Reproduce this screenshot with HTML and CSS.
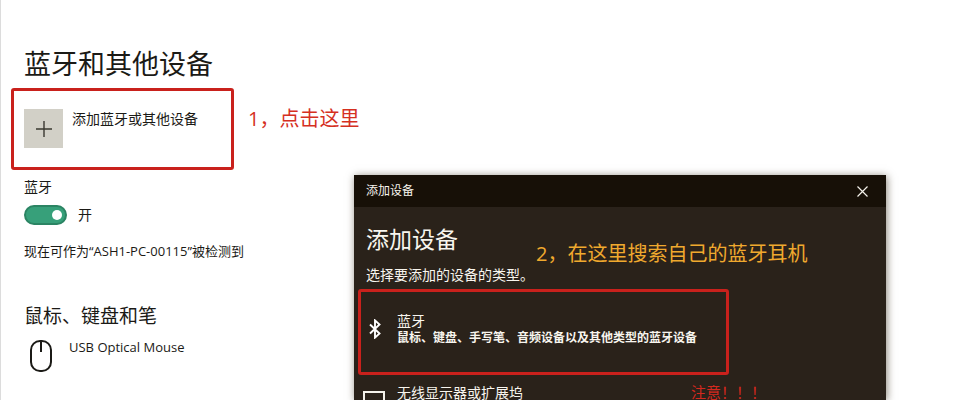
FILE: index.html
```
<!DOCTYPE html>
<html lang="zh-CN">
  <head>
    <meta charset="UTF-8" />
    <meta name="viewport" content="width=device-width, initial-scale=1.0" />
    <title>蓝牙和其他设备</title>
    <link rel="stylesheet" href="styles.css">
  </head>
  <body>
    <main class="settings">
      <h1>蓝牙和其他设备</h1>
      <div class="step">
        <div class="highlight">
          <button class="add-device" type="button">
            <span class="plus">
              <svg width="16" height="16" viewBox="0 0 16 16" fill="none" stroke="#3a3831" stroke-width="1.4">
                <path d="M8 0v16M0 8h16" />
              </svg>
            </span>
            <span>添加蓝牙或其他设备</span>
          </button>
        </div>
        <p class="note note-red">1，点击这里</p>
      </div>

      <label class="toggle-label" for="bluetooth">蓝牙</label>
      <div class="toggle-row">
        <input class="toggle" type="checkbox" id="bluetooth" checked>
        <span>开</span>
      </div>
      <p class="status">现在可作为“ASH1-PC-00115”被检测到</p>

      <h2>鼠标、键盘和笔</h2>
      <div class="device">
        <svg width="22" height="32" viewBox="0 0 22 32" fill="none" stroke="#1b1a16" stroke-width="2">
          <rect x="1" y="1" width="20" height="30" rx="9" />
          <path d="M11 1v11" />
        </svg>
        <span>USB Optical Mouse</span>
      </div>
    </main>

    <section class="dialog" role="dialog" aria-labelledby="dialog-title">
      <header class="titlebar">
        <span>添加设备</span>
        <button class="close" type="button" aria-label="关闭">
          <svg width="11" height="11" viewBox="0 0 11 11" fill="none" stroke="#f4f1ea" stroke-width="1.2">
            <path d="M.5 .5l10 10M10.5 .5l-10 10" />
          </svg>
        </button>
      </header>
      <div class="dialog-head">
        <h2 id="dialog-title">添加设备</h2>
        <p>选择要添加的设备的类型。</p>
        <p class="note note-orange">2，在这里搜索自己的蓝牙耳机</p>
      </div>
      <div class="choices">
        <button class="choice choice-marked" type="button">
          <svg class="choice-icon" width="12" height="20" viewBox="0 0 12 20" fill="none" stroke="#fff" stroke-width="1.9">
            <path d="M1 5.5l9.500 9L6 18.600V1.400l4.500 4.100L1 14.500" />
          </svg>
          <span class="choice-text">
            <span>蓝牙</span>
            <strong>鼠标、键盘、手写笔、音频设备以及其他类型的蓝牙设备</strong>
          </span>
        </button>
        <div class="choice-row">
          <button class="choice" type="button">
            <svg class="choice-icon" width="22" height="18" viewBox="0 0 22 18" fill="none" stroke="#f4f1ea" stroke-width="2">
              <path d="M1 1h20v13H1zM11 14v3M6 17h10" />
            </svg>
            <span class="choice-text">无线显示器或扩展坞</span>
          </button>
          <p class="warning">注意！！！</p>
        </div>
      </div>
    </section>
  </body>
</html>
```
FILE: styles.css
```
* {
  box-sizing: border-box;
}
body {
  margin: 0;
  min-height: 100vh;
  overflow: hidden;
  position: relative;
  background-color: #fff;
  border-left: 1px solid #dcdcdc;
  color: #1b1a16;
  font-family: 'Open Sans', 'Noto Sans CJK SC', sans-serif;
  font-size: 14px;
  line-height: 20px;
}
h1,
h2,
p {
  margin: 0;
  font-weight: normal;
}
button {
  padding: 0;
  border: none;
  background: none;
  color: inherit;
  font: inherit;
  text-align: left;
  cursor: pointer;
}
svg {
  display: block;
  flex-shrink: 0;
}
.settings {
  padding: 44px 0 0 23px;
}
.settings h1 {
  font-size: 27px;
  line-height: 40px;
}
.step {
  display: flex;
  align-items: flex-start;
  gap: 14px;
  margin: 4px 0 7px -13px;
}
.highlight {
  width: 223px;
  height: 82px;
  padding: 18px 10px;
  border: 3px solid #c9211c;
  border-radius: 3px;
}
.add-device {
  display: flex;
  align-items: flex-start;
  gap: 9px;
}
.plus {
  display: flex;
  align-items: center;
  justify-content: center;
  width: 39px;
  height: 39px;
  background-color: #d2d0c7;
}
.note {
  font-size: 20px;
  line-height: 30px;
}
.note-red {
  padding-top: 16px;
  color: #d5301f;
}
.toggle-label {
  display: block;
}
.toggle-row {
  display: flex;
  align-items: center;
  gap: 11px;
  margin-top: 8px;
}
.toggle {
  display: flex;
  align-items: center;
  justify-content: flex-end;
  appearance: none;
  width: 43px;
  height: 20px;
  margin: 0;
  padding: 0 3px;
  border: 2px solid #2b8463;
  border-radius: 10px;
  background-color: #37a07a;
}
.toggle::before {
  content: '';
  width: 10px;
  height: 10px;
  border-radius: 50%;
  background-color: #fff;
}
.toggle:not(:checked) {
  justify-content: flex-start;
}
.status {
  margin-top: 16px;
  font-size: 13px;
}
.settings h2 {
  margin-top: 40px;
  font-size: 19px;
  line-height: 30px;
}
.device {
  display: flex;
  align-items: flex-start;
  gap: 17px;
  padding-left: 6px;
  margin-top: 6px;
  font-size: 13px;
}
.device svg {
  margin-top: 3px;
}

/* add device window, open over the settings page */
.dialog {
  position: absolute;
  top: 175px;
  right: 85px;
  bottom: 0;
  left: 353px;
  background-color: #2a221a;
  color: #f8f5ee;
  box-shadow: 1px 1px 8px rgba(60, 50, 30, 0.6);
}
.titlebar {
  display: flex;
  align-items: center;
  justify-content: space-between;
  height: 32px;
  padding: 0 18px 0 12px;
  background-color: #171007;
  font-size: 12px;
}
.dialog-head {
  position: relative;
  padding: 14px 12px 0;
}
.dialog-head h2 {
  font-size: 23px;
  line-height: 36px;
}
.dialog-head p {
  margin-top: 8px;
}
.dialog-head .note {
  position: absolute;
  top: 24px;
  left: 182px;
  color: #f0a92e;
}
.choices {
  padding: 4px 5px 0 4px;
}
.choice {
  display: flex;
  align-items: center;
}
.choice-marked {
  width: 371px;
  height: 86px;
  padding: 0 8px 6px;
  border: 3px solid #c9211c;
  border-radius: 3px;
}
.choice-text {
  display: flex;
  flex-direction: column;
  line-height: 17px;
}
.choice-text strong {
  font-size: 12px;
}
.choice-marked .choice-icon {
  margin-right: 16px;
}
.choice-row {
  display: flex;
  align-items: flex-start;
  padding: 9px 0 0 5px;
}
.choice-row .choice {
  align-items: flex-start;
  width: 328px;
}
.choice-row .choice-icon {
  margin: 7px 12px 0 0;
}
.warning {
  color: #d3281e;
  font-size: 15px;
  line-height: 17px;
}
```
